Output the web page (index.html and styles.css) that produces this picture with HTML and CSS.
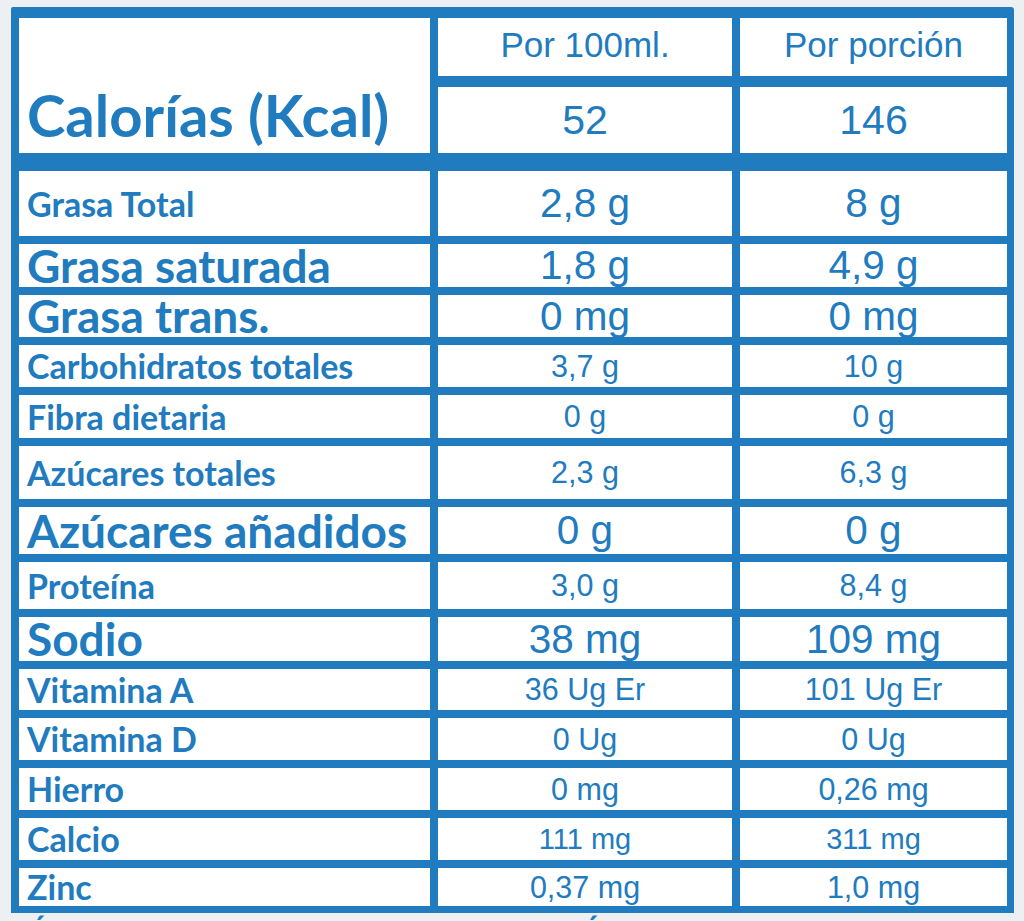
FILE: index.html
```html
<!DOCTYPE html>
<html lang="es">
<head>
<meta charset="utf-8">
<title>Información nutricional</title>
<link rel="stylesheet" href="styles.css">
</head>
<body>
<div class="panel">
  <div class="head">
    <div class="cell label label-cal"><span class="l-xl">Calorías (Kcal)</span></div>
    <div class="cell val val-hd"><span class="v-hd">Por 100ml.</span></div>
    <div class="cell val val-hd"><span class="v-hd">Por porción</span></div>
    <div class="cell val"><span class="v-cal">52</span></div>
    <div class="cell val"><span class="v-cal">146</span></div>
  </div>
  <div class="body">
    <div class="cell label"><span class="l-sm">Grasa Total</span></div>
    <div class="cell val"><span class="v-lg">2,8 g</span></div>
    <div class="cell val"><span class="v-lg">8 g</span></div>

    <div class="cell label"><span class="l-lg">Grasa saturada</span></div>
    <div class="cell val"><span class="v-lg">1,8 g</span></div>
    <div class="cell val"><span class="v-lg">4,9 g</span></div>

    <div class="cell label"><span class="l-lg">Grasa trans.</span></div>
    <div class="cell val"><span class="v-lg">0 mg</span></div>
    <div class="cell val"><span class="v-lg">0 mg</span></div>

    <div class="cell label"><span class="l-sm">Carbohidratos totales</span></div>
    <div class="cell val"><span class="v-sm">3,7 g</span></div>
    <div class="cell val"><span class="v-sm">10 g</span></div>

    <div class="cell label"><span class="l-sm">Fibra dietaria</span></div>
    <div class="cell val"><span class="v-sm">0 g</span></div>
    <div class="cell val"><span class="v-sm">0 g</span></div>

    <div class="cell label"><span class="l-sm">Azúcares totales</span></div>
    <div class="cell val"><span class="v-sm">2,3 g</span></div>
    <div class="cell val"><span class="v-sm">6,3 g</span></div>

    <div class="cell label"><span class="l-lg">Azúcares añadidos</span></div>
    <div class="cell val"><span class="v-lg">0 g</span></div>
    <div class="cell val"><span class="v-lg">0 g</span></div>

    <div class="cell label"><span class="l-sm">Proteína</span></div>
    <div class="cell val"><span class="v-sm">3,0 g</span></div>
    <div class="cell val"><span class="v-sm">8,4 g</span></div>

    <div class="cell label"><span class="l-lg">Sodio</span></div>
    <div class="cell val"><span class="v-lg">38 mg</span></div>
    <div class="cell val"><span class="v-lg">109 mg</span></div>

    <div class="cell label"><span class="l-sm">Vitamina A</span></div>
    <div class="cell val"><span class="v-sm">36 Ug Er</span></div>
    <div class="cell val"><span class="v-sm">101 Ug Er</span></div>

    <div class="cell label"><span class="l-sm">Vitamina D</span></div>
    <div class="cell val"><span class="v-sm">0 Ug</span></div>
    <div class="cell val"><span class="v-sm">0 Ug</span></div>

    <div class="cell label"><span class="l-sm">Hierro</span></div>
    <div class="cell val"><span class="v-sm">0 mg</span></div>
    <div class="cell val"><span class="v-sm">0,26 mg</span></div>

    <div class="cell label"><span class="l-sm">Calcio</span></div>
    <div class="cell val"><span class="v-sm v-narrow">111 mg</span></div>
    <div class="cell val"><span class="v-sm v-narrow">311 mg</span></div>

    <div class="cell label"><span class="l-sm">Zinc</span></div>
    <div class="cell val"><span class="v-sm">0,37 mg</span></div>
    <div class="cell val"><span class="v-sm">1,0 mg</span></div>
  </div>
</div>
<div class="below"><span class="acc acc-1">´</span><span class="acc acc-2">´</span></div>
</body>
</html>
```
FILE: styles.css
```css
html, body {
  margin: 0;
  padding: 0;
  background: #edf0f3;
}
body {
  height: 921px;
  overflow: hidden;
  color: #217bbf;
}
.panel {
  margin: 7px 0 0 11px;
  width: 988px;
  padding: 11px 7px 7px 8px;
  background: #217bbf;
  border-radius: 2px 3px 0 0;
}
.head,
.body {
  display: grid;
  grid-template-columns: 411px 294px 267px;
  column-gap: 8px;
}
.head {
  grid-template-rows: 58px 66px;
  row-gap: 11px;
  margin-bottom: 18px;
}
.label-cal {
  grid-row: 1 / span 2;
  align-items: flex-end !important;
  padding-bottom: 9px;
}
.val-hd {
  padding-bottom: 5px;
}
.body {
  grid-template-rows: 65px 43px 42px 42px 43px 53px 47px 47px 44px 41px 42px 42px 42px 38px;
  row-gap: 8px;
}
.cell {
  background: #fff;
  display: flex;
  align-items: center;
  min-width: 0;
}
.label {
  padding-left: 8px;
  font-family: Lato, "Open Sans", sans-serif;
  font-weight: 700;
}
.val {
  justify-content: center;
  font-family: "Liberation Sans", Arial, sans-serif;
  font-weight: 400;
}
.cell span {
  line-height: 1;
  white-space: nowrap;
}
.l-xl { font-size: 58px; }
.l-lg { font-size: 46px; }
.l-sm { font-size: 34px; }
.v-hd { font-size: 35px; }
.v-cal { font-size: 41px; }
.v-lg { font-size: 40.5px; }
.v-sm { font-size: 30.5px; }
.v-narrow { font-size: 29px; }

.below {
  position: relative;
  height: 8px;
  overflow: hidden;
  font-family: Lato, sans-serif;
  font-weight: 700;
  font-size: 30px;
  line-height: 1;
}
.acc {
  position: absolute;
  top: -2px;
}
.acc-1 { left: 33px; }
.acc-2 { left: 586px; }
```
